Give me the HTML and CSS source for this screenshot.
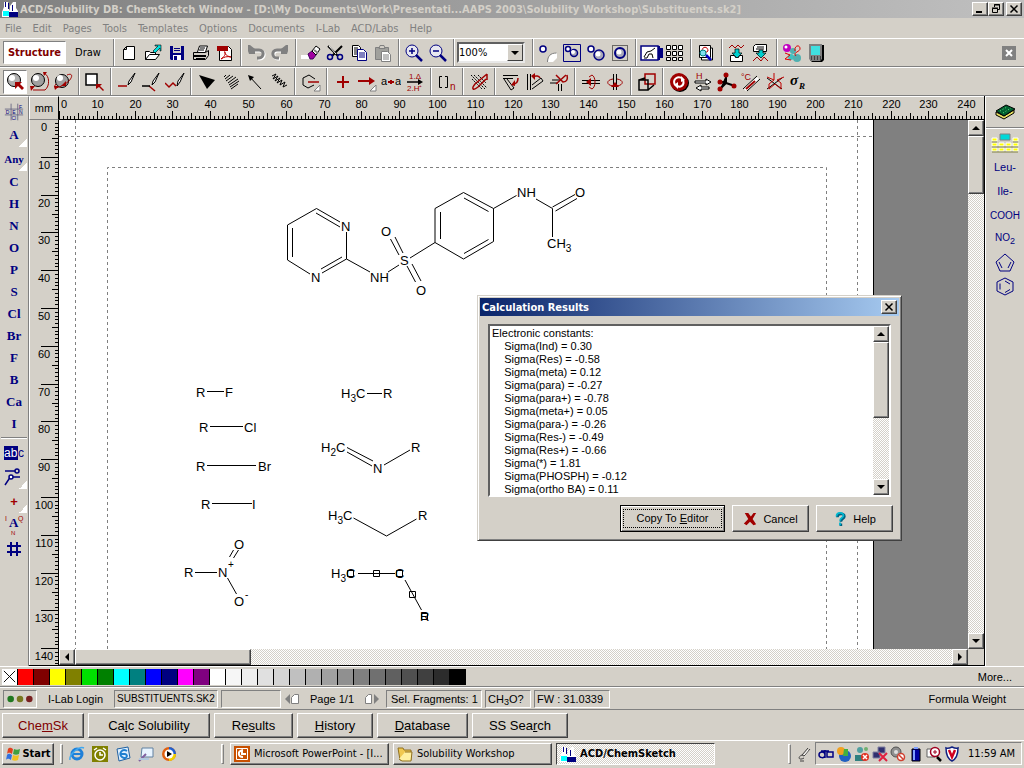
FILE: index.html
```html
<!DOCTYPE html>
<html lang="en">
<head>
    <meta charset="UTF-8">
    <meta name="viewport" content="width=device-width, initial-scale=1.0">
    <title>ACD/ChemSketch</title>
    <link rel="stylesheet" href="styles.css">
</head>
<body>
    <!-- Title bar -->
    <header class="titlebar">
        <svg class="app-icon" viewBox="0 0 16 16"><path fill="#fff" d="M2 1h4v5l2 4V5l3-4h3v6l2 3v6H0v-5l2-5z"/><path fill="#0ff" d="M1 10h6v5H1z"/><path fill="#000080" d="M7 11h9v5H7zM3 1h1v5H3zM6 2h1v6H6zM10 4h1v6h-1z"/></svg>
        <h1>ACD/Solubility DB: ChemSketch Window - [D:\My Documents\Work\Presentati...AAPS 2003\Solubility Workshop\Substituents.sk2]</h1>
        <div class="window-buttons">
            <button class="win-btn" aria-label="Minimize"><svg viewBox="0 0 12 10"><path d="M2 7h6v2H2z"/></svg></button>
            <button class="win-btn" aria-label="Restore"><svg viewBox="0 0 12 10"><path fill="none" stroke="#000" d="M4.500 3V.5h5v5H8M2.500 4.500h5v4h-5zM4 1h6M2 4h6"/></svg></button>
            <button class="win-btn close" aria-label="Close"><svg viewBox="0 0 12 10"><path stroke="#000" stroke-width="1.500" d="M2.500 1.500l7 7M9.500 1.500l-7 7"/></svg></button>
        </div>
    </header>

    <!-- Menu -->
    <nav class="menubar">
        <button>File</button><button>Edit</button><button>Pages</button><button>Tools</button><button>Templates</button><button>Options</button><button>Documents</button><button>I-Lab</button><button>ACD/Labs</button><button>Help</button>
    </nav>

    <!-- File toolbar -->
    <div class="toolbar file-bar">
        <button class="mode active">Structure</button>
        <button class="mode">Draw</button>
        <span class="sep"></span>
        <button class="tool" aria-label="New"><svg viewBox="0 0 20 20"><path fill="#fff" stroke="#000" d="M7.500 3.500h8v13h-11v-10zM4.500 6.500h3v-3"/></svg></button>
        <button class="tool" aria-label="Open"><svg viewBox="0 0 20 20"><path fill="#fff" stroke="#000" d="M2.500 16.500v-8h4l1 1h5v2M2.500 16.500l4-5h10l-4 5z"/><path d="M10 8l5-5h-3V2h6v6h-1V5l-5 5z" fill="#00e0e0" stroke="#000" stroke-width=".6"/></svg></button>
        <button class="tool" aria-label="Save"><svg viewBox="0 0 20 20"><path fill="#000080" d="M3 3h14v14H4l-1-1z"/><path fill="#d4d0c8" d="M6 3h8v7H6z"/><path fill="#fff" d="M6 12h8v5H6z"/><path fill="#000080" d="M7 5h6v1H7zM7 7h6v1H7zM7 13h3v4H7z"/></svg></button>
        <button class="tool" aria-label="Print"><svg viewBox="0 0 20 20"><path fill="#fff" stroke="#000" d="M6.500 9l2-6h8l-2 6"/><path d="M9 5h5M8 7h5" stroke="#000"/><path fill="#d4d0c8" stroke="#000" d="M2.500 9.500h12l3-2v5l-3 4h-12z"/><path stroke="#000" stroke-width="2" d="M3 13h12M5 16h9"/></svg></button>
        <button class="tool" aria-label="Export to PDF"><svg viewBox="0 0 20 20"><path fill="#fff" stroke="#000" d="M4.500 3.500h9l3 3v11h-12z"/><path fill="#a00000" d="M2 3h11v5H2z"/><path fill="none" stroke="#c00000" d="M6 16c3-2 5-5 4-7s-1 4 6 5c-4-1-7 0-10 2"/></svg></button>
        <span class="sep"></span>
        <button class="tool" aria-label="Undo"><svg viewBox="0 0 20 20"><path fill="none" stroke="#fff" stroke-width="3" d="M6 8h8c6 0 5 8 0 8h-2"/><path fill="none" stroke="#808080" stroke-width="3" d="M5 7h8c6 0 5 8 0 8h-2"/><path fill="#808080" d="M2 8V2h2l5 4v5H3z"/></svg></button>
        <button class="tool" aria-label="Redo"><svg viewBox="0 0 20 20"><path fill="none" stroke="#fff" stroke-width="3" d="M15 8H8c-6 0-5 8 0 8h2"/><path fill="none" stroke="#808080" stroke-width="3" d="M15 7H7c-6 0-5 8 0 8h2"/><path fill="#808080" d="M18 8V2h-2l-5 4v5h6z"/></svg></button>
        <span class="sep"></span>
        <button class="tool" aria-label="Erase"><svg viewBox="0 0 20 20"><path fill="#fff" d="M0 12h10v4H0z"/><path fill="#a000a0" stroke="#400060" d="M7 11l4-3 4 4-3 4h-3z"/><path fill="#fff" stroke="#000" d="M11 8l4-5 4 3-4 6z"/><path stroke="#808080" stroke-width="2" d="M13 7l4 3"/></svg></button>
        <button class="tool" aria-label="Cut"><svg viewBox="0 0 20 20"><path stroke="#000" stroke-width="2" d="M3 3l10 10M17 3L7 13"/><path stroke="#fff" d="M4 3l7 8"/><circle cx="5" cy="14" r="2.500" fill="none" stroke="#000080" stroke-width="1.500"/><circle cx="15" cy="14" r="2.500" fill="none" stroke="#000080" stroke-width="1.500"/></svg></button>
        <button class="tool" aria-label="Copy"><svg viewBox="0 0 20 20"><path fill="#fff" stroke="#000" d="M3.500 2.500h6l2 2v9h-8zM5 5h4M5 7h4M5 9h4M5 11h3"/><path fill="#fff" stroke="#000080" d="M8.500 6.500h6l3 3v8h-9zM10 10h6M10 12h6M10 14h6"/></svg></button>
        <button class="tool" aria-label="Paste"><svg viewBox="0 0 20 20"><path fill="#a0a09c" stroke="#808080" d="M2.500 4.500h13v12h-13z"/><path fill="#d4d0c8" stroke="#808080" d="M6 5.500h6l-1-3H7z"/><path fill="#fff" stroke="#808080" d="M8.500 8.500h6l3 3v7h-9zM10 12h6M10 14h6M10 16h6"/></svg></button>
        <span class="sep"></span>
        <button class="tool" aria-label="Zoom in"><svg viewBox="0 0 20 20"><circle cx="8" cy="8" r="6" fill="#e8e8f0" stroke="#000080"/><path stroke="#000080" stroke-width="2.500" d="M12 12l6 6"/><path stroke="#000080" stroke-width="1.500" d="M5 8h6M8 5v6"/></svg></button>
        <button class="tool" aria-label="Zoom out"><svg viewBox="0 0 20 20"><circle cx="8" cy="8" r="6" fill="#e8e8f0" stroke="#000080"/><path stroke="#000080" stroke-width="2.500" d="M12 12l6 6"/><path stroke="#000080" stroke-width="1.500" d="M5 8h6"/></svg></button>
        <span class="sep"></span>
        <span class="combo">
            <select aria-label="Zoom"><option>100%</option><option>200%</option></select>
            <span class="combo-arrow"><svg viewBox="0 0 8 4"><path d="M0 0h8L4 4z"/></svg></span>
        </span>
        <span class="sep"></span>
        <button class="tool" aria-label="Send back"><svg viewBox="0 0 20 20"><circle cx="5" cy="6" r="3" fill="#fff" stroke="#000080" stroke-width="1.500"/><path fill="#fff" d="M10 19c0-6 3-9 9-9v5l-4 4z"/><path fill="none" stroke="#808080" d="M9.500 19c0-6 3-9 9-9"/></svg></button>
        <button class="tool" aria-label="Bring forward"><svg viewBox="0 0 20 20"><path fill="none" stroke="#000080" d="M1.500 1.500h17v17h-17z"/><circle cx="6" cy="6" r="2.500" fill="#fff" stroke="#000080" stroke-width="1.500"/><circle cx="12" cy="10" r="3.500" fill="#a8a8b8" stroke="#000080" stroke-width="1.500"/><circle cx="11" cy="9" r="2" fill="#fff"/></svg></button>
        <button class="tool" aria-label="Group"><svg viewBox="0 0 20 20"><circle cx="5" cy="6" r="3" fill="#fff" stroke="#000080" stroke-width="1.500"/><circle cx="13" cy="12" r="5" fill="#a8a8b8" stroke="#000080" stroke-width="1.500"/><circle cx="12" cy="11" r="2.500" fill="#fff"/></svg></button>
        <button class="tool" aria-label="Select all"><svg viewBox="0 0 20 20"><path fill="none" stroke="#000" stroke-dasharray="1 1" d="M2.500 2.500h15v15h-15z"/><circle cx="10" cy="10" r="5" fill="#a8a8b8" stroke="#000080" stroke-width="2"/><circle cx="9" cy="9" r="2.500" fill="#fff"/></svg></button>
        <span class="sep"></span>
        <button class="tool" aria-label="Template window"><svg class="wide" viewBox="0 0 24 20"><path fill="#fff" stroke="#000080" stroke-width="1.500" d="M2 3h17v14H2z"/><path fill="none" stroke="#000" d="M5 14l3-5 4-1 4-3M5 15h3l2-4h3l1 4"/><path fill="#000080" d="M19 3h2v2h3v10h-3v2h-2z"/></svg></button>
        <button class="tool" aria-label="Table of radicals"><svg viewBox="0 0 20 20"><path fill="#fff" stroke="#000" d="M1.500 2.500h4v4h-4zM7.500 2.500h4v4h-4zM13.500 2.500h4v4h-4zM1.500 8.500h4v4h-4zM7.500 8.500h4v4h-4zM13.500 8.500h4v4h-4zM1.500 14.500h4v3h-4zM7.500 14.500h4v3h-4zM13.500 14.500h4v3h-4z"/></svg></button>
        <span class="sep"></span>
        <button class="tool" aria-label="Search files"><svg viewBox="0 0 20 20"><path fill="#fff" stroke="#000" d="M3.500 2.500h11v12h-11zM14.500 5h2v12h-11v-2"/><path fill="none" stroke="#c00000" d="M6 8c0-5 6-5 6 0l-3 2"/><circle cx="7" cy="10" r="3" fill="#80e0f0" stroke="#008080"/><path stroke="#0000c0" stroke-width="2.500" d="M10 12l5 5"/></svg></button>
        <span class="sep"></span>
        <button class="tool" aria-label="Import spectrum"><svg viewBox="0 0 20 20"><path fill="none" stroke="#a00000" d="M2 5l3-3 3 3 3-3 3 3 3-3"/><path fill="#fff" stroke="#000" d="M3.500 12.500h4l1 2h3l1-2h3v6h-12z"/><path fill="#00d0d0" stroke="#000" stroke-width=".7" d="M8 6h4v4h3l-5 5-5-5h3z"/></svg></button>
        <button class="tool" aria-label="Export spectrum"><svg viewBox="0 0 20 20"><path fill="#fff" stroke="#000" d="M4.500 1.500h11v7h-13v-5zM6 4h7M5 6h8"/><path fill="#00d0d0" stroke="#000" stroke-width=".7" d="M8 7h4v3h3l-5 5-5-5h3z"/><path fill="none" stroke="#a00000" d="M2 18l4-4 4 4 3-4 4 4"/></svg></button>
        <span class="sep"></span>
        <button class="tool" aria-label="3D viewer"><svg viewBox="0 0 20 20"><circle cx="5" cy="5" r="4" fill="#c000c0"/><circle cx="4" cy="4" r="1.500" fill="#fff"/><circle cx="11" cy="8" r="3" fill="#50b0b0"/><circle cx="9" cy="14" r="3" fill="#40c0c0"/><circle cx="15" cy="15" r="4" fill="#50b0b0"/><path fill="none" stroke="#e00000" d="M13 8c-1-5 4-7 5-3s-8 4-4 8M3 10l5 2-5 4 6 1"/></svg></button>
        <button class="tool" aria-label="Handheld"><svg viewBox="0 0 20 20"><path d="M4 2h14v15l-2 2H6l-2-2z"/><path fill="#808080" d="M3 1h13v15l-2 2H5l-2-2z"/><path fill="#40e0e0" d="M5 3h9v9H5z"/><path stroke="#000" stroke-dasharray="1 2" d="M5 14h10M5 16h10"/></svg></button>
        <button class="bar-close" aria-label="Close toolbar"><svg viewBox="0 0 14 14"><path fill="#fff" stroke="#808080" stroke-width="2" d="M1 1h12v12H1z"/><path fill="#808080" d="M2 2h10v10H2z"/><path stroke="#fff" stroke-width="2" d="M4 4l6 6M10 4l-6 6"/></svg></button>
    </div>

    <!-- Structure toolbar -->
    <div class="toolbar">
        <button class="tool active" aria-label="Select and move"><svg viewBox="0 0 20 20"><circle cx="9" cy="8" r="6.500" fill="#b0b0b0" stroke="#000"/><circle cx="7" cy="6" r="3" fill="#fff"/><path fill="#a00000" d="M10 10h7l-2 2 4 4-2 2-4-4-3 3z"/></svg></button>
        <button class="tool" aria-label="Select and rotate"><svg viewBox="0 0 20 20"><circle cx="9" cy="8" r="6.500" fill="#a0a0a0" stroke="#000"/><circle cx="7" cy="6" r="3" fill="#fff"/><path fill="none" stroke="#a00000" d="M15 1c6 3 6 13 1 17H4"/><path fill="#a00000" d="M1 14h5l-4 5zM14 0h4l-3 4z"/></svg></button>
        <button class="tool" aria-label="3D rotation"><svg viewBox="0 0 20 20"><circle cx="9" cy="9" r="6.500" fill="#a0a0a0" stroke="#000"/><circle cx="7" cy="6" r="3" fill="#fff"/><path fill="none" stroke="#a00000" d="M14 3c7-3 6 4-2 9s-13 5-9 0"/><path fill="#a00000" d="M13 9v5H8zM1 14h5l-4 4z"/></svg></button>
        <span class="sep"></span>
        <button class="tool" aria-label="Lasso"><svg viewBox="0 0 20 20"><path fill="#fff" stroke="#000" stroke-width="1.500" d="M1 2h11v11H1z"/><path fill="#a00000" d="M11 12h6l-2 2 4 4-1 1-4-4-3 2z"/></svg></button>
        <span class="sep"></span>
        <button class="tool" aria-label="Draw normal"><svg viewBox="0 0 20 20"><path stroke="#a00000" stroke-width="1.500" d="M1 14h9"/><path fill="#fff" stroke="#000" d="M18 1l-6 8-1 4 3-3 4-9"/></svg></button>
        <button class="tool" aria-label="Draw continuous"><svg viewBox="0 0 20 20"><path fill="none" stroke="#a00000" stroke-width="1.500" d="M8 14l6 5"/><path stroke="#000" stroke-width="1.500" d="M1 14h8"/><path fill="#fff" stroke="#000" d="M18 1l-6 8-1 4 3-3 4-9"/></svg></button>
        <button class="tool" aria-label="Draw chains"><svg viewBox="0 0 20 20"><path fill="none" stroke="#a00000" stroke-width="1.500" d="M0 11l4 4 4-4 3 3"/><path fill="#fff" stroke="#000" d="M19 1l-6 8-1 5 3-4 4-9"/></svg></button>
        <span class="sep"></span>
        <button class="tool" aria-label="Up stereo bonds"><svg viewBox="0 0 20 20"><path d="M2 3l16 5-8 9z"/></svg></button>
        <button class="tool" aria-label="Down stereo bonds"><svg viewBox="0 0 20 20"><path stroke="#000" d="M3 5l2-2M4 7l5-4M5 9l7-5M7 11l8-6M8 13l9-6M9 15l9-6M10 17l7-5"/></svg></button>
        <button class="tool" aria-label="Coordinating bonds"><svg viewBox="0 0 20 20"><path stroke="#000" d="M4 4l12 13"/><path d="M3 3l6 2-4 4z"/></svg></button>
        <button class="tool" aria-label="Undefined stereo bonds"><svg viewBox="0 0 20 20"><path fill="none" stroke="#000" d="M3 4l4-2-3 5 5-3-3 5 5-3-3 5 5-3-2 5 5-3-2 5 4-2"/></svg></button>
        <span class="sep"></span>
        <button class="tool" aria-label="Special bonds"><svg viewBox="0 0 20 20"><path fill="none" stroke="#000" d="M13 13l-6 3-5-3V6l6-3 6 4"/><path stroke="#a00000" stroke-width="1.500" d="M7 10h11"/><path fill="#fff" stroke="#808080" d="M19 13v6h-6z"/></svg></button>
        <span class="sep"></span>
        <button class="tool" aria-label="Reaction plus"><svg viewBox="0 0 20 20"><path stroke="#a00000" stroke-width="2" d="M4 10h12M10 4v12"/></svg></button>
        <button class="tool" aria-label="Reaction arrow"><svg viewBox="0 0 20 20"><path stroke="#a00000" stroke-width="2" d="M1 9h13"/><path fill="#a00000" d="M12 5l6 4-6 4z"/><path fill="#fff" stroke="#808080" d="M19 13v6h-6z"/></svg></button>
        <button class="tool" aria-label="Atom to atom map"><svg viewBox="0 0 20 20"><text x="0" y="13" font-size="11">a</text><path stroke="#a00000" stroke-width="2" d="M7 10h6M10 8v4"/><text x="14" y="13" font-size="11">a</text></svg></button>
        <button class="tool" aria-label="Reaction conditions"><svg viewBox="0 0 20 20"><text x="4" y="7" class="red" font-size="8">1.&Delta;</text><path stroke="#000" stroke-width="1.500" d="M2 10h12"/><path d="M13 7l5 3-5 3z"/><text x="2" y="19" class="red" font-size="8">2.H⁺</text></svg></button>
        <span class="sep"></span>
        <button class="tool" aria-label="Polymer"><svg viewBox="0 0 20 20"><path fill="none" stroke="#000" d="M5 4.500H2.500v11H5M8 4.500h2.500v11H8"/><text x="13" y="18" class="red" font-size="10">n</text></svg></button>
        <span class="sep"></span>
        <button class="tool" aria-label="Clean structure"><svg viewBox="0 0 20 20"><path stroke="#000" stroke-dasharray="2 1" d="M2 3l14 14M5 3l13 13M3 7l10 10M9 3l8 8"/><path fill="none" stroke="#a00000" stroke-width="1.500" d="M18 2L6 12c-4 5-2 7 3 3l8-8M18 2v6"/></svg></button>
        <span class="sep"></span>
        <button class="tool" aria-label="Set bond horizontally"><svg viewBox="0 0 20 20"><path fill="none" stroke="#000" d="M2 3.500h15M2 6.500h10M3 7l7 11 3-2-7-9"/><path fill="none" stroke="#a00000" stroke-width="1.500" d="M17 6c0 5-2 6-5 6"/><path fill="#a00000" d="M14 8v6l-4-1z"/></svg></button>
        <button class="tool" aria-label="Set bond vertically"><svg viewBox="0 0 20 20"><path fill="none" stroke="#000" d="M2.500 2v16M5.500 2v16M7 17L18 9l-2-3L7 13"/><path fill="none" stroke="#a00000" stroke-width="1.500" d="M8 5c3-2 6-1 7 1"/><path fill="#a00000" d="M10 1v7L6 4z"/></svg></button>
        <button class="tool" aria-label="Flip on bond"><svg viewBox="0 0 20 20"><path stroke="#000" d="M1 11h8M3 8h8M9.500 12v7M12.500 12v7"/><path fill="none" stroke="#a00000" stroke-width="1.500" d="M7 3l7 7c4 0 5-3 4-7M17 3L7 12"/></svg></button>
        <span class="sep"></span>
        <button class="tool" aria-label="Flip top to bottom"><svg viewBox="0 0 20 20"><path stroke="#000" d="M1 8.500h18M1 11.500h18"/><path fill="none" stroke="#a00000" d="M11 3c4 2 4 12 0 14l-3-2M8 5l3-2"/><path fill="#a00000" d="M10 6L5 10l5 4z"/></svg></button>
        <button class="tool" aria-label="Flip left to right"><svg viewBox="0 0 20 20"><path stroke="#000" d="M8.500 2v16M11.500 2v16"/><path fill="none" stroke="#a00000" d="M8 7c-7 1-7 6 0 7M12 7c7 1 7 6 0 7"/><path fill="#a00000" d="M10 10l4 5H6z"/></svg></button>
        <span class="sep"></span>
        <button class="tool" aria-label="3D optimization"><svg viewBox="0 0 20 20"><path fill="none" stroke="#a00000" stroke-width="1.500" d="M8 2h10v10H8z"/><path fill="none" stroke="#000" stroke-width="1.500" d="M2 8h9v10H2zM2 8l6-2M11 18l6-5"/></svg></button>
        <span class="sep"></span>
        <button class="tool" aria-label="Tautomers"><svg viewBox="0 0 20 20"><circle cx="11" cy="11" r="9"/><circle cx="10" cy="10" r="9" fill="#a00000"/><path fill="none" stroke="#fff" stroke-width="2" d="M6 13c-3-6 3-10 8-6M14 8c2 5-3 9-7 5"/><path fill="#fff" d="M12 4v6l4-2zM9 10v7l-4-4z"/></svg></button>
        <button class="tool" aria-label="Generate tautomeric forms"><svg viewBox="0 0 20 20"><text x="3" y="7" class="red" font-size="9">H</text><path fill="#fff" stroke="#000" d="M2 9h11V7l5 3-5 3v-2H2zM16 15H8v-2l-5 3 5 3v-2h8z"/></svg></button>
        <button class="tool" aria-label="Ball and stick"><svg viewBox="0 0 20 20"><path stroke="#000" stroke-width="2" d="M9 3v8l-6 6M9 11l9 3M9 10H3"/><circle cx="9" cy="3" r="2.500" fill="#a00000"/><circle cx="3" cy="10" r="2.500" fill="#a00000"/><circle cx="3" cy="17" r="2.500" fill="#a00000"/><circle cx="17" cy="14" r="2.500" fill="#a00000"/></svg></button>
        <button class="tool" aria-label="Boiling point"><svg viewBox="0 0 20 20"><text x="0" y="8" class="red" font-size="9">°C</text><path stroke="#000" d="M2 17L16 4M6 19L19 7"/><path stroke="#fff" stroke-width="3" d="M4 18L17 6"/><path stroke="#a00000" stroke-width="2" d="M5 17L14 9"/></svg></button>
        <button class="tool" aria-label="Dissociation"><svg viewBox="0 0 20 20"><path stroke="#000" d="M2 6l15 11M17 6L2 17"/><path fill="none" stroke="#c00000" d="M9 1v7l-5 4v5l6-5 6 5v-6l-4-3 7-3M9 8l-7-3"/></svg></button>
        <button class="tool" aria-label="Sigma constants"><svg viewBox="0 0 20 20"><text x="1" y="13" class="sigma" font-size="15">&sigma;</text><text x="10" y="17" class="sigma" font-size="9">R</text></svg></button>
    </div>

    <main class="main">
        <!-- Elements palette -->
        <aside class="palette elements">
            <button class="el" aria-label="Periodic table"><svg viewBox="0 0 24 20"><path stroke="#606080" d="M8.500 0v20M16.500 0v20M1 6.500h22M1 13.500h22"/><text x="2" y="13" font-size="6">D</text><text x="10" y="13" font-size="6">E</text><text x="18" y="13" font-size="6">N</text><text x="18" y="6" font-size="6">F</text><text x="9" y="20" font-size="6">Cl</text></svg></button>
            <button class="el tall more">A</button>
            <button class="el tall more small">Any</button>
            <button class="el">C</button><button class="el">H</button><button class="el">N</button><button class="el">O</button><button class="el">P</button><button class="el">S</button><button class="el">Cl</button><button class="el">Br</button><button class="el">F</button><button class="el">B</button><button class="el">Ca</button><button class="el">I</button>
            <hr>
            <button class="el tall" aria-label="Edit atom label"><svg viewBox="0 0 20 20"><path fill="#000080" d="M0 3h14v14H0z"/><text x="0" y="14" font-size="12" fill="#fff">ab</text><text x="14" y="14" font-size="12">c</text></svg></button>
            <button class="el tall more" aria-label="Markush bond"><svg viewBox="0 0 20 20"><path fill="none" stroke="#000080" stroke-width="1.500" d="M1 4h10M1 18l6-9M9 10h7"/><circle cx="13" cy="4" r="2" fill="none" stroke="#000080" stroke-width="1.500"/><circle cx="7" cy="10" r="2" fill="#fff" stroke="#000080" stroke-width="1.500"/></svg></button>
            <button class="el tall more charge">+</button>
            <button class="el tall" aria-label="Atom properties"><svg viewBox="0 0 20 20"><text x="5" y="12" font-size="13" font-weight="bold" class="serif">A</text><text x="1" y="6" font-size="7" class="red">I</text><text x="14" y="6" font-size="7" class="red">Q</text><text x="7" y="20" font-size="6" class="red">N</text></svg></button>
            <button class="el tall" aria-label="Numbering"><svg viewBox="0 0 20 20"><path stroke="#000080" stroke-width="2" d="M3 7h14M3 13h14M7 3v14M13 3v14"/></svg></button>
        </aside>

        <!-- Rulers and page -->
        <section class="workspace">
            <div class="ruler-unit">mm</div>
            <svg class="ruler-top" id="rulerTop"></svg>
            <svg class="ruler-left" id="rulerLeft"></svg>
            <div class="canvas">
                <div class="paper">
                    <svg class="sheet" viewBox="59 120 814 529">
                        <g class="margins">
                            <path d="M75.500 120v529M857.500 120v529M59 136.500h814"/>
                            <path d="M107.500 649V167.500h719V649"/>
                        </g>
                        <g class="bonds">
                            <!-- pyrimidine -->
                            <path d="M340 222L316.500 208.500L287.500 225V260L310 274M292.500 228V257M340 227L316 213M322 273L346.500 259V232M321 269L342 257M346.500 259L370 272"/>
                            <!-- sulfonyl -->
                            <path d="M388 272L399 265M390.500 239L399 255M395 237L403 253M407 266L415.500 282M412 264L421 281M410 258L435 242.500"/>
                            <!-- benzene ring -->
                            <path d="M435 242.500V208.500L463.500 192.500L493.500 208.500V241.500L463.500 259ZM440.500 239V212M464 198L488.500 211.500M488.500 239.500L464 253.500"/>
                            <!-- acetamide -->
                            <path d="M493.500 208.500L516.500 195.500M536 199L552.500 208.500V237M552.500 207L575 194.500M555.500 211L577 198.500"/>
                            <!-- halides -->
                            <path d="M207 391.500H224M210 426.500H243M207 465.500H256M212 503.500H252"/>
                            <!-- nitro -->
                            <path d="M195 572.500H217M229.500 557L233.500 550M233.500 558L238.500 550M227.500 578L236.500 594"/>
                            <!-- alkyl groups -->
                            <path d="M367 393.500H382M347 447.500L373 461M347 452L372 466M384 465L410 450M353.500 518L386.500 536L416.500 519"/>
                            <!-- selected fragment -->
                            <path d="M358 573.500H395M405 580L421.500 610"/>
                            <path d="M373.500 570.500h6v6h-6zM409.500 591.500h6v6h-6zM347.500 570.500h6v6h-6zM396.500 570.500h6v6h-6zM421.500 613.500h6v6h-6z"/>
                        </g>
                        <g class="atoms">
                            <text x="341" y="231">N</text><text x="311" y="282">N</text><text x="370" y="282">NH</text>
                            <text x="381" y="236">O</text><text x="400" y="265">S</text><text x="416" y="295">O</text>
                            <text x="517" y="197">NH</text><text x="575" y="197">O</text>
                            <text x="547" y="248">CH<tspan class="sub" dy="4">3</tspan></text>
                            <text x="196" y="397">R</text><text x="225" y="397">F</text>
                            <text x="199" y="432">R</text><text x="244" y="432">Cl</text>
                            <text x="196" y="471">R</text><text x="258" y="471">Br</text>
                            <text x="201" y="509">R</text><text x="252" y="509">I</text>
                            <text x="184" y="577">R</text><text x="218" y="577">N</text><text class="sub" x="228" y="568">+</text>
                            <text x="234" y="549">O</text><text x="234" y="606">O</text><text class="sub" x="245" y="598">-</text>
                            <text x="341" y="398">H<tspan class="sub" dy="4">3</tspan><tspan dy="-4">C</tspan></text><text x="383" y="398">R</text>
                            <text x="321" y="452">H<tspan class="sub" dy="4">2</tspan><tspan dy="-4">C</tspan></text><text x="373" y="473">N</text><text x="411" y="452">R</text>
                            <text x="328" y="520">H<tspan class="sub" dy="4">3</tspan><tspan dy="-4">C</tspan></text><text x="418" y="520">R</text>
                            <text x="331" y="578">H<tspan class="sub" dy="4">3</tspan><tspan dy="-4">C</tspan></text><text x="395" y="578">C</text><text x="420" y="621">R</text>
                        </g>
                    </svg>
                </div>
            </div>
            <div class="scrollbar vertical">
                <button class="scroll-btn" aria-label="Scroll up"><svg viewBox="0 0 8 4"><path d="M0 4h8L4 0z"/></svg></button>
                <div class="thumb"></div>
                <button class="scroll-btn end" aria-label="Scroll down"><svg viewBox="0 0 8 4"><path d="M0 0h8L4 4z"/></svg></button>
            </div>
            <div class="scrollbar horizontal">
                <button class="scroll-btn" aria-label="Scroll left"><svg viewBox="0 0 8 8"><path d="M6 0v8L2 4z"/></svg></button>
                <div class="thumb"></div>
                <button class="scroll-btn end" aria-label="Scroll right"><svg viewBox="0 0 8 8"><path d="M2 0v8l4-4z"/></svg></button>
            </div>
        </section>

        <!-- Radicals palette -->
        <aside class="palette radicals">
            <button class="rad book" aria-label="Dictionary"><svg viewBox="0 0 28 20"><path fill="#e8e060" stroke="#000" d="M5 11l8 4 10-6v3l-10 6-8-4z"/><path fill="#006030" stroke="#000" d="M5 10l10-6 9 4-11 7z"/><path stroke="#60e080" stroke-dasharray="1 2" d="M9 10l7-4M12 12l8-5"/></svg></button>
            <hr>
            <button class="rad" aria-label="Table of radicals"><svg viewBox="0 0 28 20"><path fill="#ff0" stroke="#fff" d="M1 5h5v3H1zM22 5h5v3h-5zM1 10h5v3H1zM8 10h5v3H8zM15 10h5v3h-5zM22 10h5v3h-5zM1 15h5v3H1zM8 15h5v3H8zM15 15h5v3h-5zM22 15h5v3h-5z"/><path fill="none" stroke="#808040" d="M1 9h5M22 9h5M1 14h26M1 19h26"/><path fill="#00d8d8" stroke="#808080" d="M9 1h10v6H9z"/></svg></button>
            <button class="rad">Leu-</button>
            <button class="rad">Ile-</button>
            <button class="rad formula-small">COOH</button>
            <button class="rad formula-small">NO<sub>2</sub></button>
            <button class="rad" aria-label="Cyclopentadiene"><svg viewBox="0 0 20 20"><path fill="none" stroke="#000080" d="M10 1l9 8-4 9H5L1 9zM16 9l-3 6M4 9l3 6"/></svg></button>
            <button class="rad" aria-label="Benzene"><svg viewBox="0 0 20 20"><path fill="none" stroke="#000080" d="M10 1l8 4v9l-8 4-8-4V5zM5 6.500v6M10 4l5 3M10 15.500l5-3"/></svg></button>
        </aside>
    </main>

    <!-- Colour palette -->
    <div class="colorbar">
        <div class="swatches" id="swatches">
            <button class="swatch" aria-label="No color"><svg viewBox="0 0 16 16"><path stroke="#000" d="M2 2l12 12M14 2L2 14"/></svg></button>
        </div>
        <button class="plain">More...</button>
    </div>

    <!-- Status bar -->
    <footer class="statusbar">
        <span class="cell"><svg class="lights" viewBox="0 0 30 12"><circle cx="5" cy="6" r="3.500" fill="#207820"/><circle cx="15" cy="6" r="3.500" fill="#787820"/><circle cx="25" cy="6" r="3.500" fill="#782020"/></svg></span>
        <button class="plain login">I-Lab Login</button>
        <span class="cell file">SUBSTITUENTS.SK2</span>
        <span class="cell blank"></span>
        <button class="pager" aria-label="Previous page"><svg viewBox="0 0 16 12"><path fill="#808080" d="M6 1v10L1 6z"/><path fill="#fff" stroke="#808080" d="M10.500 1.500h4v9h-7v-6z"/></svg></button>
        <span class="page">Page 1/1</span>
        <button class="pager" aria-label="Next page"><svg viewBox="0 0 16 12"><path fill="#808080" d="M10 1v10l5-5z"/><path fill="#fff" stroke="#808080" d="M4.500 1.500h3v9h-6v-6z"/></svg></button>
        <span class="cell sel">Sel. Fragments: 1</span>
        <span class="cell formula">CH<sub>3</sub>O?</span>
        <span class="cell weight">FW : 31.0339</span>
        <span class="hint">Formula Weight</span>
    </footer>

    <!-- Module buttons -->
    <nav class="modules">
        <button class="raised current w-chem">Che<u>m</u>Sk</button>
        <button class="raised w-calc">Ca<u>l</u>c Solubility</button>
        <button class="raised w-results">Re<u>s</u>ults</button>
        <button class="raised w-history"><u>H</u>istory</button>
        <button class="raised w-database"><u>D</u>atabase</button>
        <button class="raised w-search">SS Sea<u>r</u>ch</button>
    </nav>

    <!-- Taskbar -->
    <div class="taskbar">
        <button class="raised start"><svg viewBox="0 0 16 16"><path fill="#e04020" d="M3 3c2-2 3-1 5 0L7 8C5 7 4 6 2 8z"/><path fill="#40a040" d="M9 3c2 1 4 1 6 0l-1 5c-2 1-4 1-6 0z"/><path fill="#3070e0" d="M2 9c2-2 3-1 5 0l-1 5c-2-1-3-2-5 0z"/><path fill="#f0c020" d="M8 9c2 1 4 1 6 0l-1 5c-2 1-4 1-6 0z"/></svg>Start</button>
        <span class="grip"></span>
        <div class="quick">
            <button aria-label="Internet Explorer"><svg viewBox="0 0 16 16"><circle cx="8" cy="8" r="5" fill="none" stroke="#2080d8" stroke-width="3"/><path stroke="#2080d8" stroke-width="2" d="M4 8h9"/><path fill="none" stroke="#40a8f0" stroke-width="1.500" d="M1 14C0 8 10 0 15 2"/></svg></button>
            <button aria-label="Outlook"><svg viewBox="0 0 16 16"><path fill="#808000" d="M0 0h16v16H0z"/><circle cx="8" cy="9" r="5" fill="#808000" stroke="#fff" stroke-width="1.500"/><path fill="none" stroke="#fff" stroke-width="1.500" d="M8 6v3h3M2 4l3-2M14 4l-3-2"/></svg></button>
            <button aria-label="Outlook Express"><svg viewBox="0 0 16 16"><path fill="#e0f0ff" stroke="#2060a0" d="M2 3l11-2 2 11-11 3z"/><path fill="none" stroke="#2080d0" stroke-width="2" d="M12 5c-5-3-9 3-5 6s7-2 3-3H6"/></svg></button>
            <button aria-label="Show desktop"><svg viewBox="0 0 16 16"><path fill="#e8f4ff" stroke="#6080a0" d="M4 2h11v9H3z"/><path stroke="#8060a0" stroke-width="2" d="M1 15l7-7"/><path fill="#b0c8e0" d="M1 12h10v2H1z"/></svg></button>
            <button aria-label="Media Player"><svg viewBox="0 0 16 16"><circle cx="8" cy="8" r="7" fill="#e06010"/><path fill="#2060d0" d="M8 1a7 7 0 0 1 7 7H8z"/><path fill="#f0d000" d="M8 15a7 7 0 0 0 7-7H8z"/><circle cx="8" cy="8" r="4.500" fill="#fff"/><path d="M6 5v6l5-3z"/></svg></button>
        </div>
        <span class="grip"></span>
        <button class="raised task"><svg viewBox="0 0 16 16"><path fill="#c85000" d="M0 0h16v16H0z"/><path fill="none" stroke="#fff" d="M2.500 2.500h11v11h-11z"/><path fill="none" stroke="#fff" stroke-width="2" d="M9 4c-6 1-5 7 0 7M8 4v4h4"/></svg>Microsoft PowerPoint - [I...</button>
        <button class="raised task"><svg viewBox="0 0 16 16"><path fill="#f0c850" stroke="#907020" d="M1 2h5l1 2h7v10H3z"/><path fill="#fff0a0" stroke="#907020" d="M8 6h7l-1 9H5l-3-2"/></svg>Solubility Workshop</button>
        <button class="raised task current"><svg viewBox="0 0 16 16"><path fill="#fff" d="M2 1h4v5l2 4V5l3-4h3v6l2 3v6H0v-5l2-5z"/><path fill="#0ff" d="M1 10h6v5H1z"/><path fill="#000080" d="M7 11h9v5H7zM3 1h1v5H3zM6 2h1v6H6zM10 4h1v6h-1z"/></svg>ACD/ChemSketch</button>
        <div class="notify">
            <span class="grip"></span>
            <svg viewBox="0 0 16 16"><path fill="none" stroke="#404040" d="M12 2L6 9c-5 2-3 6 2 3M14 3l-6 7-2-1M4 15h4"/><path stroke="#fff" d="M12 4L8 9"/></svg>
            <div class="tray">
                <svg viewBox="0 0 16 16"><path fill="none" stroke="#000080" stroke-width="1.500" d="M1 9c0-4 6-4 6 0s-6 3-6 0M7 4v8M9 6h6v5H9zM3 5h8"/></svg>
                <svg viewBox="0 0 16 16"><circle cx="9" cy="10" r="6" fill="#2060c0"/><circle cx="5" cy="5" r="4" fill="#f0a020"/><path fill="#40b040" d="M8 3h4v7H7z"/></svg>
                <svg viewBox="0 0 16 16"><circle cx="6" cy="4" r="3" fill="#50a0a0"/><path fill="#308080" d="M1 9h9v6H1z"/><circle cx="12" cy="3" r="2" fill="#70b070"/><circle cx="11" cy="11" r="4" fill="#e03020"/><path stroke="#fff" stroke-width="1.500" d="M9 9l4 4M13 9l-4 4"/></svg>
                <svg viewBox="0 0 16 16"><path fill="#303070" stroke="#8080a0" d="M6 1h7v6H6zM1 6h7v6H1z"/><path stroke="#e02040" stroke-width="2" d="M7 7l8 8M15 7l-8 8"/></svg>
                <svg viewBox="0 0 16 16"><circle cx="6" cy="6" r="5" fill="#909090" stroke="#505050"/><circle cx="6" cy="6" r="2" fill="#e0e0e0"/><circle cx="11" cy="11" r="3.500" fill="#fff" stroke="#d04030" stroke-width="1.500"/><path stroke="#d04030" stroke-width="1.500" d="M9 9l5 5"/></svg>
                <svg viewBox="0 0 16 16"><path fill="#0000a0" stroke="#000" d="M4 3h8v12H4z"/><path fill="#80a0ff" d="M6 1h4v2H6zM5 4h2v10H5z"/></svg>
                <svg viewBox="0 0 16 16"><path fill="#fff" stroke="#606060" d="M1 3h8v8H1z"/><circle cx="9" cy="6" r="4.500" fill="#fff" stroke="#a00020" stroke-width="1.500"/><path stroke="#000" stroke-width="2.500" d="M11 11l4 4"/><path stroke="#a00020" d="M7 6h4M9 4v4"/></svg>
                <svg viewBox="0 0 16 16"><path fill="#fff" stroke="#102080" stroke-width="1.500" d="M2 2c2 1 4 0 6-1 2 1 4 2 6 1 0 7-2 11-6 13C4 13 2 9 2 2z"/><path fill="none" stroke="#d00020" stroke-width="2.500" d="M5 4l3 7 3-7"/></svg>
                <span class="clock">11:59 AM</span>
            </div>
        </div>
    </div>

    <!-- Calculation results dialog -->
    <div class="dialog" role="dialog" aria-labelledby="dialogTitle">
        <div class="dialog-title">
            <h2 id="dialogTitle">Calculation Results</h2>
            <button class="win-btn" aria-label="Close dialog"><svg viewBox="0 0 12 10"><path stroke="#000" stroke-width="1.500" d="M2.500 1.500l7 7M9.500 1.500l-7 7"/></svg></button>
        </div>
        <div class="results">
            <textarea aria-label="Results" readonly>Electronic constants:
    Sigma(Ind) = 0.30
    Sigma(Res) = -0.58
    Sigma(meta) = 0.12
    Sigma(para) = -0.27
    Sigma(para+) = -0.78
    Sigma(meta+) = 0.05
    Sigma(para-) = -0.26
    Sigma(Res-) = -0.49
    Sigma(Res+) = -0.66
    Sigma(*) = 1.81
    Sigma(PHOSPH) = -0.12
    Sigma(ortho BA) = 0.11</textarea>
            <div class="scrollbar vertical">
                <button class="scroll-btn" aria-label="Scroll up"><svg viewBox="0 0 8 4"><path d="M0 4h8L4 0z"/></svg></button>
                <div class="thumb"></div>
                <button class="scroll-btn end" aria-label="Scroll down"><svg viewBox="0 0 8 4"><path d="M0 0h8L4 4z"/></svg></button>
            </div>
        </div>
        <div class="dialog-buttons">
            <button class="raised default"><span>Copy To <u>E</u>ditor</span></button>
            <button class="raised"><svg viewBox="0 0 16 16"><path fill="#a00000" d="M2 1h4l3 4 3-4h3l-4 7 4 6-3 1-4-4-4 4-3-2 5-5z"/></svg>Cancel</button>
            <button class="raised"><svg viewBox="0 0 16 16"><path fill="none" stroke="#006080" stroke-width="3" d="M5 6c0-5 8-5 8-1 0 3-4 2-4 6M9 13v3"/><path fill="none" stroke="#00b8d0" stroke-width="2" d="M4 5c0-5 8-5 8-1 0 3-4 2-4 6M8 12v3"/></svg>Help</button>
        </div>
    </div>

    <script>
        const NS = "http://www.w3.org/2000/svg";
        const pxPerMm = 3.78;

        function addTick(svg, x1, y1, x2, y2) {
            const line = document.createElementNS(NS, "line");
            line.setAttribute("x1", x1);
            line.setAttribute("y1", y1);
            line.setAttribute("x2", x2);
            line.setAttribute("y2", y2);
            svg.appendChild(line);
        }

        function addLabel(svg, x, y, value) {
            const text = document.createElementNS(NS, "text");
            text.setAttribute("x", x);
            text.setAttribute("y", y);
            text.textContent = value;
            svg.appendChild(text);
        }

        function drawRulers() {
            const rulerTop = document.getElementById("rulerTop");
            const rulerLeft = document.getElementById("rulerLeft");

            // every half centimetre gets a longer tick, every centimetre a label
            for (let mm = 0; mm <= 244; mm++) {
                const pos = Math.round(mm * pxPerMm) + 0.5;
                const size = mm % 10 === 0 ? 8 : mm % 5 === 0 ? 6 : 3;
                addTick(rulerTop, pos, 22 - size, pos, 22);
                if (mm % 10 === 0) {
                    addLabel(rulerTop, mm === 0 ? 5 : pos, 11, mm);
                }
            }
            for (let mm = 0; mm <= 144; mm++) {
                const pos = Math.round(mm * pxPerMm) - 0.5;
                const size = mm % 10 === 0 ? 17 : mm % 5 === 0 ? 6 : 3;
                addTick(rulerLeft, 28 - size, pos, 28, pos);
                if (mm % 10 === 0) {
                    addLabel(rulerLeft, 14, pos + 11, mm);
                }
            }
        }

        const colors = ["#ff0000", "#800000", "#ffff00", "#808000", "#00e000", "#008000", "#00ffff", "#008080",
                        "#0000ff", "#000080", "#ff00ff", "#800080", "#ffffff", "#f6f6f6", "#eeeeee", "#e0e0e0",
                        "#d4d4d4", "#c0c0c0", "#b0b0b0", "#a0a0a0", "#909090", "#808080", "#707070", "#606060",
                        "#505050", "#404040", "#2c2c2c", "#000000"];

        function createSwatches() {
            const swatches = document.getElementById("swatches");
            colors.forEach(function(color) {
                const swatch = document.createElement("button");
                swatch.classList.add("swatch");
                swatch.setAttribute("aria-label", color);
                swatch.style.backgroundColor = color;
                swatches.appendChild(swatch);
            });
        }

        drawRulers();
        createSwatches();
    </script>
</body>
</html>
```

FILE: styles.css
```css
/* Basic page styling */
* {
    box-sizing: border-box;
}

body {
    font-family: "Liberation Sans", Arial, sans-serif;
    font-size: 11px;
    margin: 0;
    display: flex;
    flex-direction: column;
    height: 100vh;
    overflow: hidden;
    background-color: #d4d0c8;
    color: #000;
}

button {
    font: inherit;
    color: inherit;
    background: none;
    border: 0;
    padding: 0;
    margin: 0;
}

svg {
    display: block;
    flex: none;
}

hr {
    width: 100%;
    margin: 2px 0;
    border: 0;
    border-top: 1px solid #808080;
    border-bottom: 1px solid #fff;
}

svg text {
    font-family: "Liberation Sans", Arial, sans-serif;
}

svg .red {
    fill: #a00000;
}

svg .sigma {
    font-family: "Liberation Serif", serif;
    font-weight: bold;
    font-style: italic;
}

/* Title bar */
.titlebar {
    height: 18px;
    flex: none;
    display: flex;
    align-items: center;
    gap: 2px;
    padding: 0 2px;
    background: linear-gradient(to right, #808080, #c0c0c0);
    color: #d4d0c8;
}

.app-icon {
    width: 16px;
    height: 16px;
}

.titlebar h1 {
    flex: 1;
    margin: 0;
    font-family: "DejaVu Sans Condensed", "DejaVu Sans", sans-serif;
    font-size: 11px;
    font-weight: bold;
    white-space: nowrap;
    overflow: hidden;
}

.window-buttons {
    display: flex;
}

.win-btn {
    width: 16px;
    height: 14px;
    display: flex;
    align-items: center;
    justify-content: center;
    background: #d4d0c8;
    border: 1px solid;
    border-color: #fff #404040 #404040 #fff;
    box-shadow: inset -1px -1px #808080;
}

.win-btn svg {
    width: 12px;
    height: 10px;
}

.win-btn.close {
    margin-left: 2px;
}

/* Menu */
.menubar {
    height: 20px;
    flex: none;
    display: flex;
    color: #808080;
    font-family: "DejaVu Sans Condensed", "DejaVu Sans", sans-serif;
}

.menubar button {
    padding: 0 6px 0 5px;
}

/* Toolbars */
.toolbar {
    height: 29px;
    flex: none;
    display: flex;
    align-items: center;
    padding: 0 3px;
    border-top: 1px solid #fff;
    border-bottom: 1px solid #808080;
}

.tool {
    width: 24px;
    height: 24px;
    display: flex;
    align-items: center;
    justify-content: center;
}

.tool svg {
    width: 20px;
    height: 20px;
}

.tool svg.wide {
    width: 24px;
}

.tool.active,
.mode.active {
    background: #fff;
    border: 1px solid;
    border-color: #808080 #fff #fff #808080;
}

.sep {
    width: 8px;
    height: 27px;
    flex: none;
    background: linear-gradient(to right, #808080 50%, #fff 50%) center / 2px 100% no-repeat;
}

.file-bar .sep {
    width: 7px;
}

.mode {
    width: 44px;
    height: 23px;
    font-family: "DejaVu Sans Condensed", "DejaVu Sans", sans-serif;
}

.mode.active {
    width: 63px;
    font-weight: bold;
    color: #800000;
}

.combo {
    width: 68px;
    height: 21px;
    margin-right: 4px;
    display: flex;
    background: #fff;
    border: 2px solid;
    border-color: #606060 #e8e8e8 #e8e8e8 #606060;
}

.combo select {
    flex: 1;
    width: 0;
    appearance: none;
    border: 0;
    padding: 0;
    background: #fff;
    font-family: "DejaVu Sans Condensed", "DejaVu Sans", sans-serif;
    font-size: 11px;
}

.combo-arrow {
    width: 16px;
    display: flex;
    align-items: center;
    justify-content: center;
    background: #d4d0c8;
    border: 1px solid;
    border-color: #fff #404040 #404040 #fff;
}

.combo-arrow svg {
    width: 8px;
    height: 4px;
}

.bar-close {
    margin-left: auto;
    margin-right: 5px;
}

.bar-close svg {
    width: 14px;
    height: 14px;
}

/* Main area */
.main {
    flex: 1;
    min-height: 0;
    display: flex;
}

.palette {
    flex: none;
    display: flex;
    flex-direction: column;
    align-items: center;
    overflow: hidden;
    color: #000080;
    border-top: 1px solid #fff;
}

.palette svg {
    fill: #000080;
}

.elements {
    width: 29px;
    padding: 4px 1px 0;
    border-right: 1px solid #808080;
    font-family: "Liberation Serif", serif;
    font-size: 13px;
    font-weight: bold;
}

.el {
    width: 26px;
    height: 22px;
    flex: none;
    display: flex;
    align-items: center;
    justify-content: center;
}

.el svg {
    width: 20px;
    height: 20px;
    font-weight: normal;
}

.el.tall {
    height: 24px;
}

.el.small {
    font-size: 11px;
}

.el.charge {
    color: #a00000;
    font-family: "Liberation Sans", Arial, sans-serif;
}

/* Little corner mark for buttons with a drop-down */
.el.more {
    background: linear-gradient(135deg, transparent 50%, #fff 50%) right bottom / 8px 8px no-repeat;
}

svg .serif {
    font-family: "Liberation Serif", serif;
}

.radicals {
    width: 39px;
    border-left: 1px solid #fff;
}

.rad {
    height: 24px;
    flex: none;
}

.rad svg {
    width: 28px;
    height: 20px;
}

.rad.book {
    height: 28px;
}

.rad.formula-small {
    font-size: 10px;
}

.rad sub {
    font-size: 9px;
    line-height: 1;
}

/* Rulers and page */
.workspace {
    flex: 1;
    min-width: 0;
    display: grid;
    grid-template-columns: 30px 1fr 16px;
    grid-template-rows: 24px 1fr 16px;
    border-bottom: 1px solid #000;
    border-right: 1px solid #000;
}

.ruler-unit {
    display: flex;
    align-items: center;
    justify-content: center;
    border: 1px solid;
    border-color: #fff #000 #808080 #fff;
}

.ruler-top {
    grid-column: 2 / 4;
    width: 100%;
    height: 24px;
    border-top: 1px solid #fff;
    border-bottom: 1px solid #000;
}

.ruler-left {
    grid-row: 2 / 4;
    width: 30px;
    height: 100%;
    border-left: 1px solid #fff;
    border-right: 1px solid #000;
}

.ruler-top line,
.ruler-left line {
    stroke: #000;
}

.ruler-top text,
.ruler-left text {
    font-size: 11px;
    text-anchor: middle;
}

.canvas {
    min-width: 0;
    min-height: 0;
    overflow: hidden;
    background: #808080;
}

.paper {
    width: max-content;
    height: 100%;
    background: #fff;
    border-right: 1px solid #000;
}

.sheet {
    width: 814px;
    height: 529px;
}

.margins path {
    fill: none;
    stroke: #808080;
    stroke-dasharray: 3 3;
}

.bonds path {
    fill: none;
    stroke: #000;
}

.atoms text {
    font-size: 13px;
}

.atoms .sub {
    font-size: 10px;
}

/* Scrollbars */
.scrollbar {
    display: flex;
    background: repeating-conic-gradient(#fff 0 25%, #d4d0c8 0 50%) 0 0 / 2px 2px;
}

.scrollbar.vertical {
    width: 16px;
    flex-direction: column;
}

.scrollbar.horizontal {
    grid-column: 2;
    height: 16px;
}

.scroll-btn,
.thumb {
    background: #d4d0c8;
    border: 1px solid;
    border-color: #fff #404040 #404040 #fff;
    box-shadow: inset -1px -1px #808080;
}

.scroll-btn {
    width: 16px;
    height: 16px;
    flex: none;
    display: flex;
    align-items: center;
    justify-content: center;
}

.scroll-btn svg {
    width: 8px;
}

.scroll-btn.end {
    margin-top: auto;
}

.horizontal .scroll-btn.end {
    margin-top: 0;
    margin-left: auto;
}

.vertical .thumb {
    height: 58px;
}

.horizontal .thumb {
    width: 176px;
}

/* Colour palette */
.colorbar {
    height: 21px;
    flex: none;
    display: flex;
    align-items: center;
    justify-content: space-between;
    padding: 0 12px 0 2px;
    border-top: 1px solid #fff;
    border-bottom: 1px solid #808080;
}

.swatches {
    display: flex;
}

.swatch {
    width: 16px;
    height: 16px;
    background: #fff;
    border-right: 1px solid #000;
}

/* Status bar */
.statusbar {
    height: 23px;
    flex: none;
    display: flex;
    align-items: center;
    gap: 3px;
    padding: 0 18px 0 3px;
    border-top: 1px solid #fff;
    border-bottom: 1px solid #808080;
    white-space: nowrap;
}

.cell {
    height: 18px;
    display: flex;
    align-items: center;
    padding: 0 2px;
    border: 1px solid;
    border-color: #808080 #fff #fff #808080;
}

.lights {
    width: 28px;
    height: 12px;
}

.login {
    width: 71px;
}

.cell.file {
    width: 104px;
    font-size: 10px;
}

.cell.blank {
    width: 60px;
}

.pager svg {
    width: 16px;
    height: 12px;
}

.page {
    width: 58px;
    text-align: center;
}

.cell.sel {
    width: 96px;
    margin-left: 3px;
    padding: 0 4px;
}

.formula {
    width: 46px;
}

.formula sub {
    font-size: 9px;
    line-height: 1;
    align-self: end;
}

.weight {
    width: 76px;
}

.hint {
    margin-left: auto;
}

/* Module buttons */
.modules {
    height: 30px;
    flex: none;
    display: flex;
    align-items: center;
    gap: 4px;
    padding: 0 2px;
    font-size: 13px;
}

.raised {
    display: flex;
    align-items: center;
    justify-content: center;
    background: #d4d0c8;
    border: 1px solid;
    border-color: #fff #404040 #404040 #fff;
    box-shadow: inset -1px -1px #808080;
    white-space: nowrap;
}

.modules .raised {
    display: block;
    height: 25px;
}

.modules .current {
    color: #800000;
}

.w-chem {
    width: 82px;
}

.w-calc {
    width: 122px;
}

.w-results {
    width: 79px;
}

.w-history {
    width: 76px;
}

.w-database {
    width: 91px;
}

.w-search {
    width: 96px;
}

/* Taskbar */
.taskbar {
    height: 28px;
    flex: none;
    display: flex;
    align-items: center;
    gap: 4px;
    padding: 0 2px 2px;
    border-top: 1px solid #fff;
    font-family: "DejaVu Sans Condensed", "DejaVu Sans", sans-serif;
}

.taskbar svg {
    width: 16px;
    height: 16px;
}

.start {
    width: 52px;
    height: 22px;
    gap: 1px;
    font-weight: bold;
}

.grip {
    width: 3px;
    height: 20px;
    flex: none;
    margin: 0 2px;
    border: 1px solid;
    border-color: #fff #808080 #808080 #fff;
}

.quick {
    width: 146px;
    display: flex;
    gap: 7px;
}

.task {
    width: 159px;
    height: 22px;
    justify-content: flex-start;
    gap: 4px;
    padding: 0 3px;
    overflow: hidden;
}

.task.current {
    font-weight: bold;
    background: repeating-conic-gradient(#fff 0 25%, #d4d0c8 0 50%) 0 0 / 2px 2px;
    border-color: #404040 #fff #fff #404040;
    box-shadow: none;
}

.notify {
    margin-left: auto;
    display: flex;
    align-items: center;
    gap: 3px;
}

.tray {
    height: 23px;
    display: flex;
    align-items: center;
    gap: 2px;
    padding: 0 6px 0 2px;
    border: 1px solid;
    border-color: #808080 #fff #fff #808080;
}

.clock {
    margin-left: 6px;
    white-space: nowrap;
}

/* Dialog */
.dialog {
    position: absolute;
    left: 477px;
    top: 295px;
    width: 425px;
    padding: 2px;
    background: #d4d0c8;
    border: 1px solid;
    border-color: #d4d0c8 #404040 #404040 #d4d0c8;
    box-shadow: inset 1px 1px #fff, inset -1px -1px #808080;
}

.dialog-title {
    height: 18px;
    display: flex;
    align-items: center;
    justify-content: space-between;
    padding: 0 2px;
    background: linear-gradient(to right, #0a246a, #a6caf0);
    color: #fff;
}

.dialog-title h2 {
    margin: 0;
    font-family: "DejaVu Sans Condensed", "DejaVu Sans", sans-serif;
    font-size: 11px;
}

.results {
    height: 173px;
    margin: 8px;
    display: flex;
    background: #fff;
    border: 2px solid;
    border-color: #606060 #fff #fff #606060;
}

.results textarea {
    flex: 1;
    border: 0;
    outline: 0;
    padding: 1px 2px;
    resize: none;
    overflow: hidden;
    white-space: pre;
    font: inherit;
    line-height: 13px;
}

.results .thumb {
    height: 76px;
}

.dialog-buttons {
    display: flex;
    justify-content: flex-end;
    gap: 7px;
    padding: 0 6px 6px;
}

.dialog-buttons .raised {
    width: 77px;
    height: 27px;
    gap: 6px;
}

.dialog-buttons svg {
    width: 14px;
    height: 14px;
}

.dialog-buttons .default {
    width: 105px;
    padding: 2px;
    border-color: #000;
    box-shadow: inset 1px 1px #fff, inset -1px -1px #808080;
}

.default span {
    flex: 1;
    line-height: 17px;
    border: 1px dotted #000;
}
```
